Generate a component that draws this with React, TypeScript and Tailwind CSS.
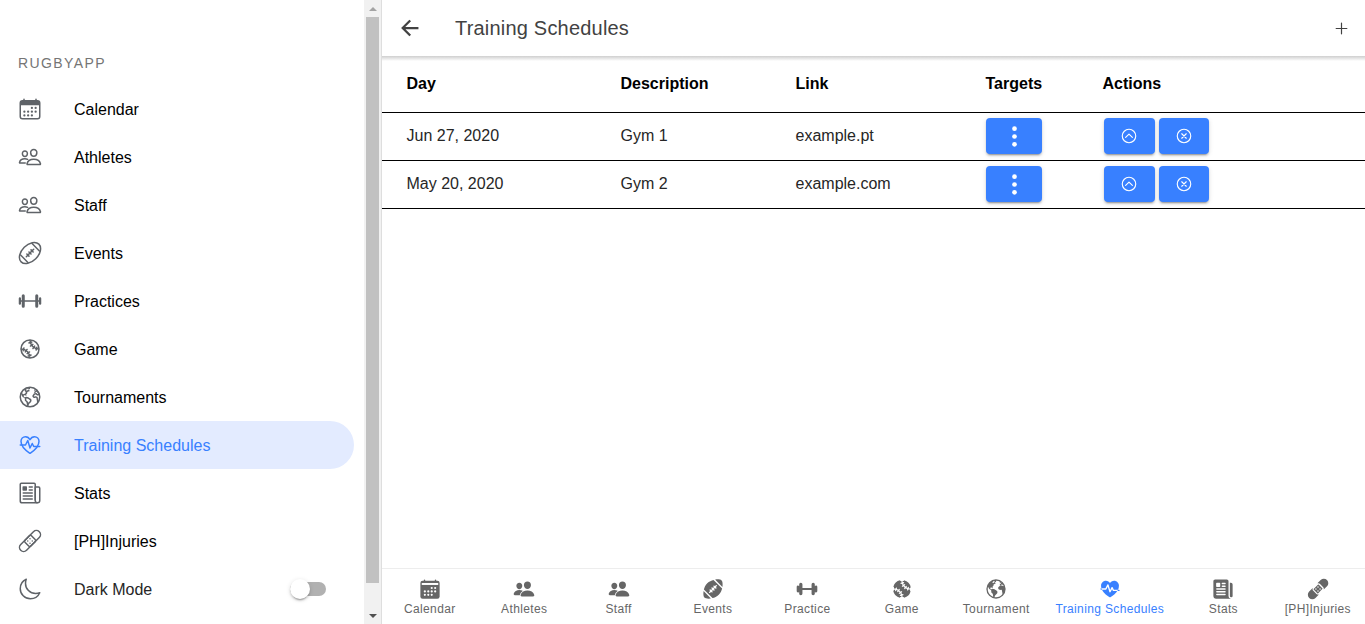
import type { IconType } from "react-icons";
import {
  IoAdd,
  IoAmericanFootball,
  IoAmericanFootballOutline,
  IoArrowBackSharp,
  IoBandage,
  IoBandageOutline,
  IoBarbell,
  IoBarbellOutline,
  IoBaseball,
  IoBaseballOutline,
  IoChevronUpCircleOutline,
  IoCloseCircleOutline,
  IoEarth,
  IoEarthOutline,
  IoEllipsisVertical,
  IoFitness,
  IoFitnessOutline,
  IoMoonOutline,
  IoNewspaper,
  IoNewspaperOutline,
  IoPeople,
  IoPeopleOutline,
} from "react-icons/io5";

type IconProps = { className?: string };
type Entry = { label: string; Icon: IconType | ((p: IconProps) => React.ReactNode); active?: boolean };

const calendarDots = [
  [296, 232], [376, 232],
  [136, 312], [216, 312], [296, 312], [376, 312],
  [136, 392], [216, 392], [296, 392],
];

function CalendarOutlineIcon({ className }: IconProps) {
  return (
    <svg viewBox="0 0 512 512" className={className} fill="currentColor" stroke="none">
      <rect x="48" y="80" width="416" height="384" rx="48" fill="none" stroke="currentColor" strokeWidth="32" />
      <path d="M128 48v32M384 48v32" stroke="currentColor" strokeWidth="32" strokeLinecap="round" />
      <path d="M464 176v-48a48 48 0 0 0-48-48H96a48 48 0 0 0-48 48v48z" />
      {calendarDots.map(([x, y]) => (
        <circle key={`${x}-${y}`} cx={x} cy={y} r="24" />
      ))}
    </svg>
  );
}

function CalendarIcon({ className }: IconProps) {
  return (
    <svg viewBox="0 0 512 512" className={className} fill="currentColor">
      <rect x="32" y="64" width="448" height="416" rx="52" />
      <path d="M128 48v32M384 48v32" stroke="currentColor" strokeWidth="32" strokeLinecap="round" />
      <path d="M64 116h384v46H64z" fill="white" />
      {calendarDots.map(([x, y]) => (
        <circle key={`${x}-${y}`} cx={x} cy={y} r="25" fill="white" />
      ))}
    </svg>
  );
}

const menu: Entry[] = [
  { label: "Calendar", Icon: CalendarOutlineIcon },
  { label: "Athletes", Icon: IoPeopleOutline },
  { label: "Staff", Icon: IoPeopleOutline },
  { label: "Events", Icon: IoAmericanFootballOutline },
  { label: "Practices", Icon: IoBarbellOutline },
  { label: "Game", Icon: IoBaseballOutline },
  { label: "Tournaments", Icon: IoEarthOutline },
  { label: "Training Schedules", Icon: IoFitnessOutline, active: true },
  { label: "Stats", Icon: IoNewspaperOutline },
  { label: "[PH]Injuries", Icon: IoBandageOutline },
];

const tabs: Entry[] = [
  { label: "Calendar", Icon: CalendarIcon },
  { label: "Athletes", Icon: IoPeople },
  { label: "Staff", Icon: IoPeople },
  { label: "Events", Icon: IoAmericanFootball },
  { label: "Practice", Icon: IoBarbell },
  { label: "Game", Icon: IoBaseball },
  { label: "Tournament", Icon: IoEarth },
  { label: "Training Schedules", Icon: IoFitness, active: true },
  { label: "Stats", Icon: IoNewspaper },
  { label: "[PH]Injuries", Icon: IoBandage },
];

const schedules = [
  { day: "Jun 27, 2020", description: "Gym 1", link: "example.pt" },
  { day: "May 20, 2020", description: "Gym 2", link: "example.com" },
];

const columns = "grid grid-cols-[214px_175px_190px_117px_1fr] pl-[24.5px] border-b border-black";
const button =
  "flex h-9 items-center justify-center rounded bg-[#3880ff] text-white shadow-[0_3px_1px_-2px_rgba(0,0,0,0.2),0_2px_2px_0_rgba(0,0,0,0.14),0_1px_5px_0_rgba(0,0,0,0.12)]";

function Sidebar() {
  return (
    <aside className="flex w-[382px] shrink-0 border-r border-[#dedede]">
      <div className="w-[364px] pt-[53px]">
        <h1 className="h-8 pl-[18px] text-sm leading-5 tracking-[1.4px] text-[#757575]">RUGBYAPP</h1>
        <nav>
          {menu.map(({ label, Icon, active }) => (
            <a
              key={label}
              className={`mr-2.5 flex h-12 items-center rounded-r-full pl-[18px] ${
                active ? "bg-[#e3ebff] text-[#3880ff]" : "text-black"
              }`}
            >
              <Icon className={`mr-8 size-6 ${active ? "text-[#3880ff]" : "text-[#5f6368]"}`} />
              <span className="pt-0.5">{label}</span>
            </a>
          ))}
        </nav>
        <div className="flex h-12 items-center pl-[18px] text-[#262626]">
          <IoMoonOutline className="mr-8 size-6 text-[#5f6368]" />
          <span className="flex-1 pt-0.5">Dark Mode</span>
          <span className="mr-[38px] flex h-3.5 w-9 items-center rounded-full bg-[#b1b1b1]">
            <span className="size-5 shrink-0 rounded-full bg-white shadow-[0_3px_1px_-2px_rgba(0,0,0,0.2),0_2px_2px_0_rgba(0,0,0,0.14),0_1px_5px_0_rgba(0,0,0,0.12)]" />
          </span>
        </div>
      </div>
      <div className="flex w-[17px] flex-col items-center bg-[#f1f1f1]">
        <div className="flex h-[17px] items-center">
          <svg width="8" height="4" viewBox="0 0 8 4" className="fill-[#a3a3a3]">
            <path d="M4 0 8 4H0z" />
          </svg>
        </div>
        <div className="h-[566px] w-[13px] bg-[#c1c1c1]" />
        <div className="flex flex-1 items-end pb-[6px]">
          <svg width="8" height="4" viewBox="0 0 8 4" className="fill-[#505050]">
            <path d="M0 0h8L4 4z" />
          </svg>
        </div>
      </div>
    </aside>
  );
}

function ScheduleTable() {
  return (
    <div className="flex-1 text-[#262626]">
      <div className={`${columns} h-[57px] pt-4 font-bold text-black`}>
        <span>Day</span>
        <span>Description</span>
        <span>Link</span>
        <span>Targets</span>
        <span>Actions</span>
      </div>
      {schedules.map((s) => (
        <div key={s.day} className={`${columns} h-12 pt-[5px]`}>
          <span className="pt-1.5">{s.day}</span>
          <span className="pt-1.5">{s.description}</span>
          <span className="pt-1.5">{s.link}</span>
          <button className={`${button} w-14 pl-px`}>
            <IoEllipsisVertical className="size-[25px]" />
          </button>
          <span className="flex gap-1 pl-px">
            <button className={`${button} w-[51px]`}>
              <IoChevronUpCircleOutline className="size-[18px]" />
            </button>
            <button className={`${button} w-[50px]`}>
              <IoCloseCircleOutline className="size-[18px]" />
            </button>
          </span>
        </div>
      ))}
    </div>
  );
}

export default function App() {
  return (
    <div className="flex h-[624px] w-[1365px] overflow-hidden bg-white font-['Liberation_Sans',Arial,sans-serif] text-base">
      <Sidebar />
      <main className="flex min-w-0 flex-1 flex-col">
        <header className="flex h-14 shrink-0 items-center pl-4 pr-3.5 text-[#424242]">
          <IoArrowBackSharp className="size-6" />
          <h2 className="flex-1 pl-[33px] text-xl tracking-[0.2px]">Training Schedules</h2>
          <IoAdd className="size-[19px]" />
        </header>
        <div className="-mb-[5px] h-[5px] shrink-0 bg-linear-to-b from-[#cfcfcf] to-transparent" />
        <ScheduleTable />
        <footer className="flex h-14 shrink-0 border-t border-[#ededed] pl-[0.6px] text-[#666]">
          {tabs.map(({ label, Icon, active }) => (
            <a
              key={label}
              className={`flex flex-1 flex-col items-center whitespace-nowrap px-3 pt-[9px] text-xs tracking-[0.36px] ${
                active ? "text-[#3880ff]" : ""
              }`}
            >
              <Icon className="mb-px size-[22px]" />
              {label}
            </a>
          ))}
        </footer>
      </main>
    </div>
  );
}
